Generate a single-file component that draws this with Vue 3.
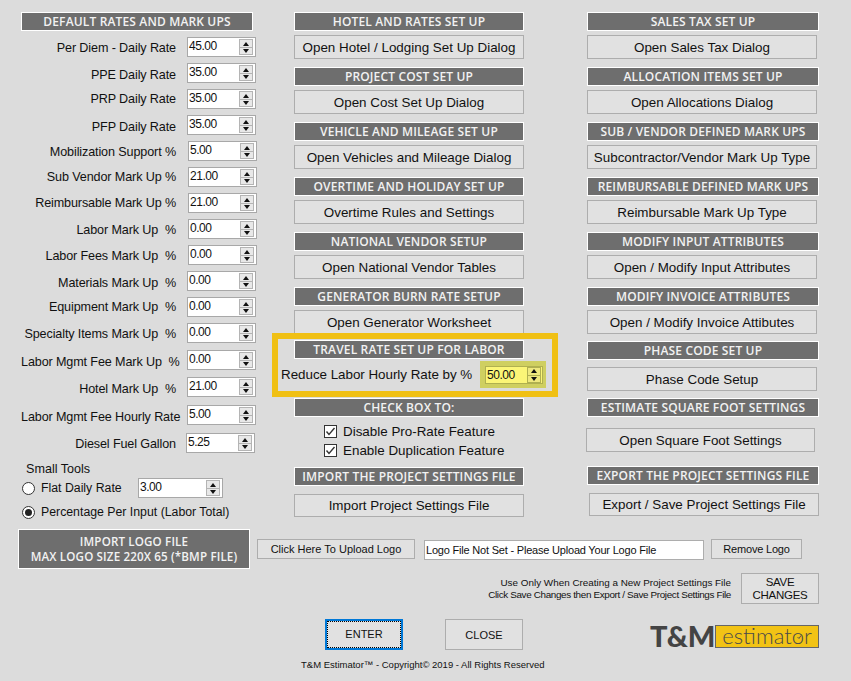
<script setup>
const rates = [
  ['Per Diem - Daily Rate', '45.00', 3, 26, 10], ['PPE Daily Rate', '35.00', 4, 26, 10], ['PRP Daily Rate', '35.00', 2, 26, 10],
  ['PFP Daily Rate', '35.00', 4, 26, 10], ['Mobilization Support %', '5.00', 3, 26, 11], ['Sub Vendor Mark Up %', '21.00', 2, 26, 11],
  ['Reimbursable Mark Up %', '21.00', 2, 26, 11], ['Labor Mark Up  %', '0.00', 3, 26, 11], ['Labor Fees Mark Up  %', '0.00', 3, 26, 11],
  ['Materials Mark Up  %', '0.00', 4, 26, 10], ['Equipment Mark Up  %', '0.00', 2, 26, 10], ['Specialty Items Mark Up  %', '0.00', 3, 27, 10],
  ['Labor Mgmt Fee Mark Up  %', '0.00', 4, 27, 10], ['Hotel Mark Up  %', '21.00', 4, 28, 10], ['Labor Mgmt Fee Hourly Rate', '5.00', 4, 28, 10],
  ['Diesel Fuel Gallon', '5.25', 3, 26, 9],
]
const mid = [
  ['HOTEL AND RATES SET UP', 'Open Hotel / Lodging Set Up Dialog'],
  ['PROJECT COST SET UP', 'Open Cost Set Up Dialog'],
  ['VEHICLE AND MILEAGE SET UP', 'Open Vehicles and Mileage Dialog'],
  ['OVERTIME AND HOLIDAY SET UP', 'Overtime Rules and Settings'],
  ['NATIONAL VENDOR SETUP', 'Open National Vendor Tables'],
  ['GENERATOR BURN RATE SETUP', 'Open Generator Worksheet'],
]
const right = [
  ['SALES TAX SET UP', 'Open Sales Tax Dialog'],
  ['ALLOCATION ITEMS SET UP', 'Open Allocations Dialog'],
  ['SUB / VENDOR DEFINED MARK UPS', 'Subcontractor/Vendor Mark Up Type'],
  ['REIMBURSABLE DEFINED MARK UPS', 'Reimbursable Mark Up Type'],
  ['MODIFY INPUT ATTRIBUTES', 'Open / Modify Input Attributes'],
  ['MODIFY INVOICE ATTRIBUTES', 'Open / Modify  Invoice Attibutes'],
  ['PHASE CODE SET UP', 'Phase Code Setup'],
  ['ESTIMATE SQUARE FOOT SETTINGS', 'Open Square Foot Settings'],
]
</script>

<template>
  <div class="page">
    <div class="columns">
      <section class="left">
        <h2 class="head left-head">DEFAULT RATES AND MARK UPS</h2>
        <div v-for="r in rates" :key="r[0]" class="rate" :style="{ height: r[3] + 'px' }">
          <span class="rate-label" :style="{ paddingTop: r[2] + 'px' }">{{ r[0] }}</span>
          <div class="spin" :style="{ marginLeft: r[4] + 'px' }"><span class="val">{{ r[1] }}</span><span class="arrows"><i class="up"></i><i class="down"></i></span></div>
        </div>
        <div class="tools">
          <div class="tools-title">Small Tools</div>
          <div class="tool-row">
            <span class="radio"></span><span class="tool-text flat">Flat Daily Rate</span>
            <div class="spin tool-spin"><span class="val">3.00</span><span class="arrows"><i class="up"></i><i class="down"></i></span></div>
          </div>
          <div class="tool-row second">
            <span class="radio on"></span><span class="tool-text">Percentage Per Input (Labor Total)</span>
          </div>
        </div>
      </section>

      <section class="middle">
        <div v-for="m in mid" :key="m[0]" class="pair">
          <h2 class="head">{{ m[0] }}</h2>
          <button class="btn wide">{{ m[1] }}</button>
        </div>
        <div class="travel">
          <h2 class="head">TRAVEL RATE SET UP FOR LABOR</h2>
          <div class="travel-row">
            <span class="travel-label">Reduce Labor Hourly Rate by %</span>
            <div class="hl"><div class="spin yellow"><span class="val">50.00</span><span class="arrows"><i class="up"></i><i class="down"></i></span></div></div>
          </div>
        </div>
        <h2 class="head check-head">CHECK BOX TO:</h2>
        <div class="checks">
          <label class="check"><svg width="13" height="13" viewBox="0 0 13 13"><rect x=".5" y=".5" width="12" height="12" fill="#fff" stroke="#333"/><path d="M2.5 6.5 5 9.5 10.5 3" fill="none" stroke="#333" stroke-width="1.4"/></svg>Disable Pro-Rate Feature</label>
          <label class="check"><svg width="13" height="13" viewBox="0 0 13 13"><rect x=".5" y=".5" width="12" height="12" fill="#fff" stroke="#333"/><path d="M2.5 6.5 5 9.5 10.5 3" fill="none" stroke="#333" stroke-width="1.4"/></svg>Enable Duplication Feature</label>
        </div>
        <h2 class="head import-head">IMPORT THE PROJECT SETTINGS FILE</h2>
        <button class="btn wide import-btn">Import Project Settings File</button>
      </section>

      <section class="right">
        <div v-for="m in right" :key="m[0]" class="pair">
          <h2 class="head">{{ m[0] }}</h2>
          <button class="btn wide">{{ m[1] }}</button>
        </div>
        <h2 class="head export-head">EXPORT THE PROJECT SETTINGS FILE</h2>
        <button class="btn export-btn">Export / Save Project  Settings File</button>
      </section>
    </div>

    <div class="logo-row">
      <h2 class="head logo-head">IMPORT LOGO FILE<br>MAX LOGO SIZE 220X 65 (*BMP FILE)</h2>
      <button class="btn upload">Click Here To Upload Logo</button>
      <div class="logo-input">Logo File Not Set - Please Upload Your Logo File</div>
      <button class="btn remove">Remove Logo</button>
    </div>

    <div class="save-row">
      <p class="note">Use Only When Creating a New Project Settings File<br><span class="tight">Click Save Changes then Export / Save Project Settings File</span></p>
      <button class="btn save">SAVE<br>CHANGES</button>
    </div>

    <div class="action-row">
      <button class="btn action enter"><span>ENTER</span></button>
      <button class="btn action close">CLOSE</button>
      <div class="brand">
        <span class="tm">T&amp;M</span>
        <span class="est">estimator<svg class="hand" width="6" height="6" viewBox="0 0 6 6"><path d="M1.5 3 3 4.5 5 1.5" fill="none" stroke="#4a4a4a" stroke-width=".9"/></svg></span>
      </div>
    </div>
    <p class="copy">T&amp;M Estimator™ - Copyright© 2019 - All Rights Reserved</p>
  </div>
</template>

<style>
html, body { margin: 0; background: #dcdcdc; }
</style>

<style scoped>
.page { width: 851px; height: 681px; overflow: hidden; background: #dcdcdc; color: #111; font-family: "Liberation Sans", Arial, sans-serif; font-size: 13.4px; box-sizing: border-box; padding-top: 12px; }
.columns { display: flex; height: 517px; }
.head { margin: 0; box-sizing: border-box; background: #6e6e6e; border: 1px solid #fff; color: #f2f2f2; font-family: "Open Sans", sans-serif; font-size: 12px; font-weight: 600; letter-spacing: .15px; text-align: center; height: 19px; line-height: 17px; white-space: nowrap; overflow: hidden; }
.btn { display: block; box-sizing: border-box; background: #e1e1e1; border: 1px solid #adadad; color: #111; font: inherit; padding: 0; white-space: nowrap; }
.left { width: 234px; margin-left: 21px; }
.left-head { width: 232px; margin-bottom: 6px; }
.rate { display: flex; }
.rate-label { width: 155px; margin-right: 1px; flex: none; text-align: right; line-height: 16px; white-space: pre; font-size: 12.6px; letter-spacing: -.12px; }
.spin { box-sizing: border-box; display: flex; flex: none; width: 69px; height: 20px; background: #fff; border: 1px solid #a8a8a8; }
.val { flex: 1; font-size: 12px; letter-spacing: -.45px; line-height: 17px; padding-left: 1px; }
.arrows { width: 14px; margin: 1px 2px 1px 1px; display: flex; flex-direction: column; border: 1px solid #b4b4b4; background: #b4b4b4; gap: 1px; box-sizing: border-box; }
.arrows i { flex: 1; background: #e8e8e8; position: relative; }
.arrows i::after { content: ""; position: absolute; left: 2.5px; top: 2px; border: 3.5px solid transparent; border-top: 0; border-bottom: 4px solid #111; }
.arrows i.down::after { top: 1px; border-bottom: 0; border-top: 4px solid #111; }
.tools { margin-top: 2px; margin-left: 1px; }
.tools-title { margin-left: 4px; line-height: 16px; font-size: 12.6px; }
.tool-row { display: flex; align-items: center; height: 20px; margin-top: 1px; }
.tool-row.second { margin-top: 4px; }
.radio { box-sizing: border-box; flex: none; width: 13px; height: 13px; border: 1px solid #333; border-radius: 50%; background: #fff; margin-right: 6px; position: relative; }
.radio.on::after { content: ""; position: absolute; inset: 2px; border-radius: 50%; background: #222; }
.tool-text { white-space: nowrap; font-size: 12.3px; }
.flat { width: 97px; }
.tool-spin { width: 85px; }
.middle { width: 230px; margin-left: 39px; }
.right { width: 232px; margin-left: 63px; }
.pair { height: 55px; }
.pair .btn { margin-top: 4px; }
.wide { width: 230px; height: 24px; }
.travel { box-sizing: border-box; width: 286px; height: 64px; margin: -9px 0 1px -22px; padding: 1px 0 0 16px; border: 6px solid #f0c014; }
.travel .head { width: 230px; }
.travel-row { display: flex; align-items: center; height: 31px; margin-left: -13px; }
.travel-label { flex: none; width: 192px; white-space: nowrap; letter-spacing: -.03px; }
.hl { margin-left: 7px; background: #cfcf60; padding: 5px 3px 4px 5px; }
.yellow { width: 58px; height: 18px; background: #fbf577; border-color: #b0b050; }
.yellow .val { line-height: 16px; padding-left: 1px; }
.yellow .arrows { border-color: #b0b050; background: #b0b050; margin: 0 1px 0 0; }
.yellow .arrows i { background: #eee87e; }
.yellow .arrows i::after { top: 1px; }
.checks { margin-top: 5px; padding-left: 30px; }
.check { display: flex; align-items: center; gap: 6px; height: 19px; }
.import-head { margin-top: 7px; }
.import-btn { margin-top: 8px; height: 23px; }
.right .pair:nth-child(7) { margin-top: -1px; height: 57px; }
.right .pair:nth-child(7) .btn { margin-top: 7px; height: 24px; }
.right .pair:nth-child(8) { height: 68px; }
.right .pair:nth-child(8) .btn { margin-top: 11px; width: 229px; margin-left: -1px; }
.export-btn { width: 230px; height: 23px; margin: 8px 0 0 2px; }
.logo-row { display: flex; align-items: center; height: 40px; }
.logo-head { width: 232px; height: 40px; margin-left: 18px; white-space: normal; line-height: 15px; padding-top: 4px; font-size: 11.6px; }
.upload { width: 158px; height: 20px; margin-left: 7px; font-size: 11px; }
.logo-input { box-sizing: border-box; width: 280px; height: 20px; margin: 2px 0 0 9px; background: #fff; border: 1px solid #adadad; font-size: 11px; letter-spacing: -.2px; line-height: 18px; padding-left: 1px; white-space: nowrap; }
.remove { width: 91px; height: 20px; margin-left: 7px; font-size: 11px; letter-spacing: -.2px; }
.save-row { display: flex; justify-content: flex-end; align-items: center; height: 31px; margin-top: 4px; padding-right: 32px; }
.note { margin: 0 10px 0 0; font-size: 9.9px; line-height: 12px; text-align: right; }
.tight { letter-spacing: -.35px; }
.save { width: 78px; height: 31px; font-size: 11.5px; letter-spacing: -.3px; line-height: 13px; }
.action-row { display: flex; align-items: flex-start; height: 31px; margin-top: 15px; padding-left: 325px; }
.action { width: 78px; height: 31px; font-size: 11px; }
.enter { border: 2px solid #0078d7; }
.enter span { display: block; height: 27px; line-height: 25px; box-sizing: border-box; border: 1px dotted #000; }
.close { margin-left: 42px; }
.brand { display: flex; align-items: center; margin: 5px 0 0 127px; height: 24px; }
.tm { flex: none; width: 65px; font-family: Lato, sans-serif; font-size: 29px; font-weight: 900; color: #444; line-height: 24px; }
.est { position: relative; box-sizing: border-box; flex: none; width: 104px; height: 23px; background: #f2c315; border: 1px solid #666; color: #4a4a4a; font-family: Lato, sans-serif; font-size: 22px; font-weight: 300; line-height: 19px; text-align: center; }
.hand { position: absolute; left: 80px; top: 8px; }
.copy { margin: 9px 0 0; padding-left: 301px; font-size: 9.5px; line-height: 12px; white-space: nowrap; }
</style>
